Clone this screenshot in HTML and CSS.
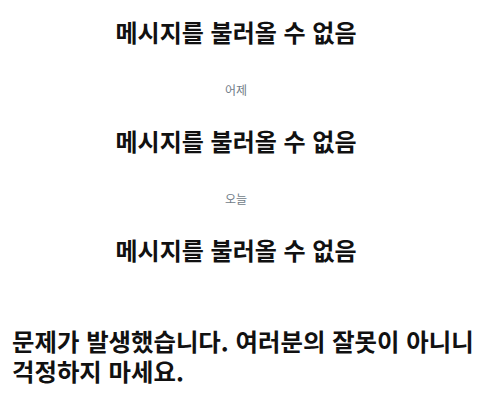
FILE: index.html
```html
<!DOCTYPE html>
<html lang="ko">
<head>
<meta charset="utf-8">
<link rel="stylesheet" href="styles.css">
</head>
<body>
<div class="thread">
  <div class="msg">메시지를 불러올 수 없음</div>
  <div class="day">어제</div>
  <div class="msg">메시지를 불러올 수 없음</div>
  <div class="day">오늘</div>
  <div class="msg">메시지를 불러올 수 없음</div>
</div>
<p class="error">문제가 발생했습니다. 여러분의 잘못이 아니니 걱정하지 마세요.</p>
</body>
</html>
```
FILE: styles.css
```css
html, body {
  margin: 0;
  padding: 0;
  background: #fff;
}
body {
  font-family: "Noto Sans CJK KR", "Noto Sans", sans-serif;
  color: #111;
}
.thread {
  display: flex;
  flex-direction: column;
  align-items: center;
  padding: 15px 23px 0 0;
}
.msg {
  font-size: 24px;
  font-weight: 700;
  line-height: 34px;
}
.day {
  font-size: 12px;
  color: #717c88;
  line-height: 16px;
  margin: 33px 0 26px;
}
.error {
  margin: 59px 12px 0;
  font-size: 24.4px;
  font-weight: 600;
  line-height: 30px;
  word-break: keep-all;
}
```
